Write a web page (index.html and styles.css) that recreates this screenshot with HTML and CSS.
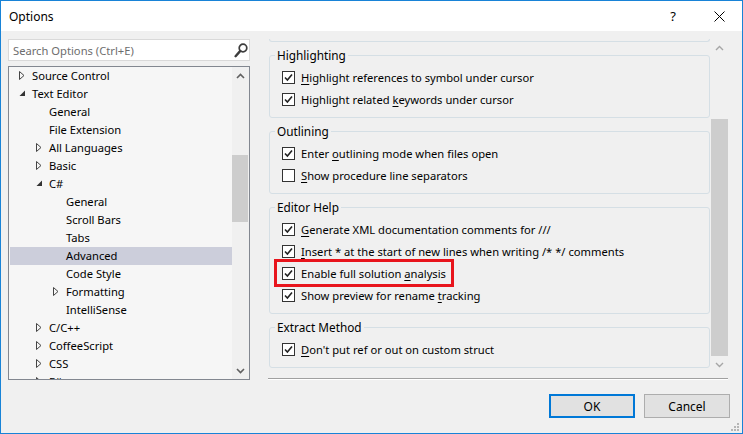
FILE: index.html
```html
<!DOCTYPE html>
<html lang="en">
  <head>
    <meta charset="UTF-8" />
    <title>Options</title>
    <link rel="stylesheet" href="styles.css">
  </head>
  <body>
    <div class="window">
      <!-- Title bar -->
      <div class="titlebar">
        <span class="title">Options</span>
        <span class="caption-btn help">?</span>
        <span class="caption-btn">
          <svg width="11" height="11" viewBox="0 0 11 11"><path d="M0.5 0.5 L10.5 10.5 M10.5 0.5 L0.5 10.5" stroke="#000" stroke-width="1" fill="none"/></svg>
        </span>
      </div>

      <div class="main">
        <!-- Left: search + tree -->
        <div class="nav">
          <div class="search">
            <span class="search-text">Search Options (Ctrl+E)</span>
            <svg width="14" height="15" viewBox="0 0 14 15"><circle cx="9" cy="5" r="3.8" fill="none" stroke="#3d3d3d" stroke-width="1.7"/><path d="M6.3 7.9 L1.6 13.2" stroke="#3d3d3d" stroke-width="2.4" stroke-linecap="round"/></svg>
          </div>

          <div class="tree">
            <ul class="tree-list">
              <li class="tree-item lvl0"><span class="twisty"><svg width="6" height="9" viewBox="0 0 6 9"><path d="M0.5 0.5 L5 4.5 L0.5 8.5 Z" fill="none" stroke="#444"/></svg></span>Source Control</li>
              <li class="tree-item lvl0"><span class="twisty"><svg width="7" height="7" viewBox="0 0 7 7"><path d="M6 0.5 V6 H0.5 Z" fill="#333"/></svg></span>Text Editor</li>
              <li class="tree-item lvl1"><span class="twisty"></span>General</li>
              <li class="tree-item lvl1"><span class="twisty"></span>File Extension</li>
              <li class="tree-item lvl1"><span class="twisty"><svg width="6" height="9" viewBox="0 0 6 9"><path d="M0.5 0.5 L5 4.5 L0.5 8.5 Z" fill="none" stroke="#444"/></svg></span>All Languages</li>
              <li class="tree-item lvl1"><span class="twisty"><svg width="6" height="9" viewBox="0 0 6 9"><path d="M0.5 0.5 L5 4.5 L0.5 8.5 Z" fill="none" stroke="#444"/></svg></span>Basic</li>
              <li class="tree-item lvl1"><span class="twisty"><svg width="7" height="7" viewBox="0 0 7 7"><path d="M6 0.5 V6 H0.5 Z" fill="#333"/></svg></span>C#</li>
              <li class="tree-item lvl2"><span class="twisty"></span>General</li>
              <li class="tree-item lvl2"><span class="twisty"></span>Scroll Bars</li>
              <li class="tree-item lvl2"><span class="twisty"></span>Tabs</li>
              <li class="tree-item lvl2 selected"><span class="twisty"></span>Advanced</li>
              <li class="tree-item lvl2"><span class="twisty"></span>Code Style</li>
              <li class="tree-item lvl2"><span class="twisty"><svg width="6" height="9" viewBox="0 0 6 9"><path d="M0.5 0.5 L5 4.5 L0.5 8.5 Z" fill="none" stroke="#444"/></svg></span>Formatting</li>
              <li class="tree-item lvl2"><span class="twisty"></span>IntelliSense</li>
              <li class="tree-item lvl1"><span class="twisty"><svg width="6" height="9" viewBox="0 0 6 9"><path d="M0.5 0.5 L5 4.5 L0.5 8.5 Z" fill="none" stroke="#444"/></svg></span>C/C++</li>
              <li class="tree-item lvl1"><span class="twisty"><svg width="6" height="9" viewBox="0 0 6 9"><path d="M0.5 0.5 L5 4.5 L0.5 8.5 Z" fill="none" stroke="#444"/></svg></span>CoffeeScript</li>
              <li class="tree-item lvl1"><span class="twisty"><svg width="6" height="9" viewBox="0 0 6 9"><path d="M0.5 0.5 L5 4.5 L0.5 8.5 Z" fill="none" stroke="#444"/></svg></span>CSS</li>
              <li class="tree-item lvl1"><span class="twisty"><svg width="6" height="9" viewBox="0 0 6 9"><path d="M0.5 0.5 L5 4.5 L0.5 8.5 Z" fill="none" stroke="#444"/></svg></span>F#</li>
            </ul>
            <div class="vscroll">
              <div class="sb-btn"><svg width="9" height="6" viewBox="0 0 9 6"><path d="M1 5 L4.5 1.5 L8 5" fill="none" stroke="#606060" stroke-width="1.6"/></svg></div>
              <div class="sb-thumb tree-thumb"></div>
              <div class="sb-fill"></div>
              <div class="sb-btn"><svg width="9" height="6" viewBox="0 0 9 6"><path d="M1 1 L4.5 4.5 L8 1" fill="none" stroke="#606060" stroke-width="1.6"/></svg></div>
            </div>
          </div>
        </div>

        <!-- Right: option pages -->
        <div class="pane">
          <div class="pane-view">
            <div class="groups">
              <div class="group-tail"></div>

              <fieldset class="group">
                <legend>Highlighting</legend>
                <div class="option"><span class="check"><svg width="11" height="11" viewBox="0 0 11 11"><path d="M2 5.5 L4.4 8 L9 2.5" fill="none" stroke="#222" stroke-width="1.6"/></svg></span><span><u>H</u>ighlight references to symbol under cursor</span></div>
                <div class="option"><span class="check"><svg width="11" height="11" viewBox="0 0 11 11"><path d="M2 5.5 L4.4 8 L9 2.5" fill="none" stroke="#222" stroke-width="1.6"/></svg></span><span>Highlight related <u>k</u>eywords under cursor</span></div>
              </fieldset>

              <fieldset class="group">
                <legend>Outlining</legend>
                <div class="option"><span class="check"><svg width="11" height="11" viewBox="0 0 11 11"><path d="M2 5.5 L4.4 8 L9 2.5" fill="none" stroke="#222" stroke-width="1.6"/></svg></span><span>Enter <u>o</u>utlining mode when files open</span></div>
                <div class="option"><span class="check"></span><span><u>S</u>how procedure line separators</span></div>
              </fieldset>

              <fieldset class="group">
                <legend>Editor Help</legend>
                <div class="option"><span class="check"><svg width="11" height="11" viewBox="0 0 11 11"><path d="M2 5.5 L4.4 8 L9 2.5" fill="none" stroke="#222" stroke-width="1.6"/></svg></span><span><u>G</u>enerate XML documentation comments for ///</span></div>
                <div class="option"><span class="check"><svg width="11" height="11" viewBox="0 0 11 11"><path d="M2 5.5 L4.4 8 L9 2.5" fill="none" stroke="#222" stroke-width="1.6"/></svg></span><span><u>I</u>nsert * at the start of new lines when writing /* */ comments</span></div>
                <div class="option marked"><span class="check"><svg width="11" height="11" viewBox="0 0 11 11"><path d="M2 5.5 L4.4 8 L9 2.5" fill="none" stroke="#222" stroke-width="1.6"/></svg></span><span>Enable full solution <u>a</u>nalysis</span></div>
                <div class="option"><span class="check"><svg width="11" height="11" viewBox="0 0 11 11"><path d="M2 5.5 L4.4 8 L9 2.5" fill="none" stroke="#222" stroke-width="1.6"/></svg></span><span>Show preview for rename <u>t</u>racking</span></div>
              </fieldset>

              <fieldset class="group">
                <legend>Extract Method</legend>
                <div class="option"><span class="check"><svg width="11" height="11" viewBox="0 0 11 11"><path d="M2 5.5 L4.4 8 L9 2.5" fill="none" stroke="#222" stroke-width="1.6"/></svg></span><span><u>D</u>on't put ref or out on custom struct</span></div>
              </fieldset>
            </div>

            <div class="vscroll">
              <div class="sb-btn"><svg width="9" height="6" viewBox="0 0 9 6"><path d="M1 5 L4.5 1.5 L8 5" fill="none" stroke="#a6a6a6" stroke-width="1.4"/></svg></div>
              <div class="sb-thumb pane-thumb"></div>
              <div class="sb-fill"></div>
              <div class="sb-btn"><svg width="9" height="6" viewBox="0 0 9 6"><path d="M1 1 L4.5 4.5 L8 1" fill="none" stroke="#a6a6a6" stroke-width="1.4"/></svg></div>
            </div>
          </div>
          <div class="separator"></div>
        </div>
      </div>

      <div class="footer">
        <button class="btn btn-default">OK</button>
        <button class="btn">Cancel</button>
      </div>

      <svg class="grip" width="10" height="10" viewBox="0 0 10 10">
        <rect x="7" y="1" width="2" height="2" fill="#b5b5b5"/>
        <rect x="4" y="4" width="2" height="2" fill="#b5b5b5"/>
        <rect x="7" y="4" width="2" height="2" fill="#b5b5b5"/>
        <rect x="1" y="7" width="2" height="2" fill="#b5b5b5"/>
        <rect x="4" y="7" width="2" height="2" fill="#b5b5b5"/>
        <rect x="7" y="7" width="2" height="2" fill="#b5b5b5"/>
      </svg>
    </div>
  </body>
</html>
```

FILE: styles.css
```css
* {
  box-sizing: border-box;
}

body {
  margin: 0;
  font-family: "Noto Sans", "Open Sans", sans-serif;
  font-size: 11.2px;
  color: #000;
  background: #f0f0f0;
}

.window {
  position: relative;
  width: 743px;
  height: 434px;
  border: 1px solid #1883d7;
  background: #f0f0f0;
  display: flex;
  flex-direction: column;
  overflow: hidden;
}

/* Title bar */
.titlebar {
  flex: none;
  height: 30px;
  background: #fff;
  display: flex;
  align-items: center;
  padding-left: 8px;
}

.title {
  flex: 1;
  font-size: 12px;
}

.caption-btn {
  width: 46px;
  height: 30px;
  display: flex;
  align-items: center;
  justify-content: center;
}

.help {
  font-size: 13px;
}

.main {
  flex: none;
  height: 349px;
  display: flex;
}

/* Left column */
.nav {
  width: 249px;
  padding: 8px 0 0 7px;
  display: flex;
  flex-direction: column;
  gap: 5px;
}

.search {
  height: 22px;
  background: #fff;
  border: 1px solid #d9d9d9;
  display: flex;
  align-items: center;
  padding: 0 1px 0 4px;
  color: #6d6d6d;
}

.search-text {
  flex: 1;
}

.tree {
  height: 314px;
  border: 1px solid #828790;
  background: #f6f6f6;
  display: flex;
}

.tree-list {
  flex: 1;
  list-style: none;
  margin: 0 0 0 1px;
  padding: 0;
  overflow: hidden;
}

.tree-item {
  height: 18px;
  padding-bottom: 2px;
  display: flex;
  align-items: center;
  white-space: nowrap;
}

.tree-item.selected {
  background: #cccedb;
}

.lvl0 {
  padding-left: 9px;
}

.lvl1 {
  padding-left: 26px;
}

.lvl2 {
  padding-left: 43px;
}

.twisty {
  flex: none;
  width: 13px;
  display: flex;
  align-items: center;
  padding-top: 1px;
}

/* Scroll bars */
.vscroll {
  flex: none;
  width: 17px;
  display: flex;
  flex-direction: column;
  background: #f0f0f0;
}

.sb-btn {
  height: 17px;
  display: flex;
  align-items: center;
  justify-content: center;
}

.sb-thumb {
  background: #cdcdcd;
}

.sb-fill {
  flex: 1;
}

.tree-thumb {
  margin: 71px 1px 0 0;
  height: 67px;
}

.pane-thumb {
  margin-top: 63px;
  height: 237px;
}

/* Right column */
.pane {
  width: 460px;
  margin-left: 18px;
  padding-top: 8px;
  display: flex;
  flex-direction: column;
}

.pane-view {
  height: 334px;
  display: flex;
  overflow: hidden;
}

.groups {
  width: 443px;
  padding-left: 1px;
  overflow: hidden;
}

.group-tail {
  height: 3px;
  margin-right: 1px;
  border: 1px solid #d5dfe5;
  border-top: none;
  border-radius: 0 0 3px 3px;
}

.group {
  margin: 5px 1px 0 0;
  padding: 3px 8px 7px 5px;
  border: 1px solid #d5dfe5;
  border-radius: 3px;
  min-width: 0;
}

.group legend {
  padding: 0 2px;
  font-size: 11.8px;
  line-height: 16px;
}

.option {
  height: 22px;
  display: flex;
  align-items: center;
  padding-left: 7px;
  white-space: nowrap;
}

.option u {
  text-underline-offset: 2px;
}

.check {
  flex: none;
  width: 13px;
  height: 13px;
  margin-right: 6px;
  border: 1px solid #333;
  background: #fff;
  display: flex;
  align-items: center;
  justify-content: center;
}

.option.marked {
  position: relative;
  width: max-content;
}

.option.marked::after {
  content: "";
  position: absolute;
  left: -1px;
  right: -8px;
  top: -3px;
  bottom: -3px;
  border: 3px solid #e8141c;
}

.separator {
  margin-top: 5px;
  height: 2px;
  border-top: 1px solid #a0a0a0;
  border-bottom: 1px solid #fff;
}

/* Buttons */
.footer {
  flex: 1;
  display: flex;
  justify-content: flex-end;
  align-items: flex-start;
  gap: 9px;
  padding: 14px 12px 0 0;
}

.btn {
  width: 86px;
  height: 24px;
  padding: 0;
  font: inherit;
  font-size: 12px;
  color: #000;
  background: #e1e1e1;
  border: 1px solid #adadad;
}

.btn-default {
  border: 2px solid #0078d7;
}

.grip {
  position: absolute;
  right: 2px;
  bottom: 1px;
}
```
